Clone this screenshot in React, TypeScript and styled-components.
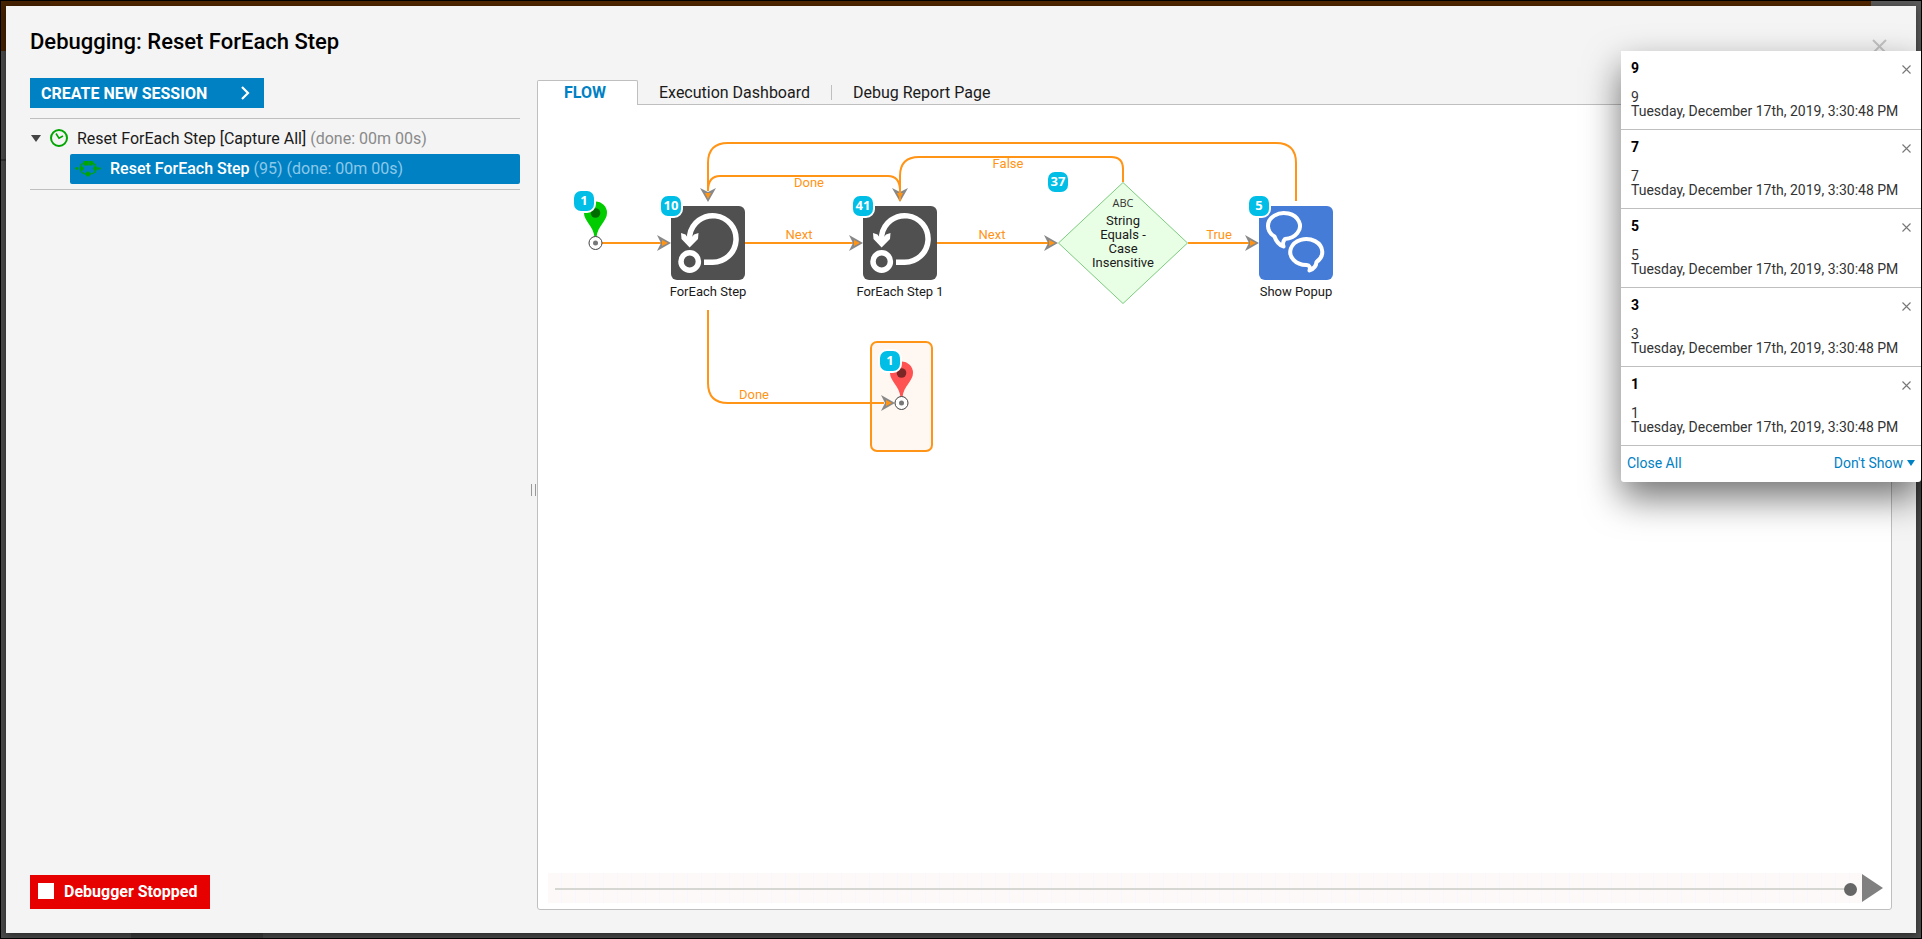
import React from "react";
import styled, { createGlobalStyle, css } from "styled-components";

const color = {
  blue: "#0081c4",
  orange: "#ff9416",
  line: "#bfbfbf",
  panel: "#f4f4f4",
  text: "#1a1a1a",
  muted: "#8a8a8a",
  arrow: "#888888",
};

const GlobalStyle = createGlobalStyle`
  *, *::before, *::after { box-sizing: border-box; }
  body { margin: 0; font-family: Roboto, "Liberation Sans", sans-serif; font-size: 16px; color: ${color.text}; }
  button { font-family: inherit; border: 0; padding: 0; background: none; cursor: pointer; color: inherit; }
  svg { display: block; }
`;

const Backdrop = styled.div`
  position: relative;
  min-height: 100vh;
  padding: 5px;
  border: 1px solid #000;
  display: flex;
  background:
    linear-gradient(#3e3e3e, #3e3e3e) 130px 100% / 132px 6px no-repeat,
    linear-gradient(#482200, #482200) 0 0 / 49px 50px no-repeat,
    linear-gradient(90deg, #522700 calc(100% - 50px), #5a5a5a calc(100% - 50px)) 0 0 / 100% 50px no-repeat,
    linear-gradient(#333, #333) 0 158px / 6px 2px no-repeat,
    #4c4c4c;
`;

const Dialog = styled.section`
  flex: 1;
  min-width: 0;
  display: flex;
  flex-direction: column;
  padding: 0 24px 23px;
  background: ${color.panel};
  box-shadow: 0 2px 8px rgba(0, 0, 0, 0.5);
`;

const Header = styled.header`
  height: 72px;
  flex: none;
  display: flex;
  justify-content: space-between;
  align-items: center;
  padding-right: 3px;
`;

const Title = styled.h1`
  margin: 0;
  font-size: 22px;
  line-height: 28px;
  font-weight: 500;
  color: #000;
`;

const IconButton = styled.button<{ $tone: string }>`
  color: ${(p) => p.$tone};
`;

const Body = styled.div`
  flex: 1;
  display: flex;
  min-height: 0;
`;

const Sidebar = styled.aside`
  width: 490px;
  flex: none;
  display: flex;
  flex-direction: column;
  align-items: flex-start;
  padding-bottom: 1px;
`;

const CreateButton = styled.button`
  width: 234px;
  height: 30px;
  display: flex;
  align-items: center;
  justify-content: space-between;
  padding: 0 14px 0 11px;
  background: ${color.blue};
  color: #fff;
  font-size: 16px;
  font-weight: 700;
`;

const Sessions = styled.ul`
  list-style: none;
  width: 100%;
  margin: 10px 0 0;
  padding: 5px 0;
  border-top: 1px solid ${color.line};
  border-bottom: 1px solid ${color.line};
`;

const SessionRow = styled.li<{ $selected?: boolean }>`
  height: 30px;
  display: flex;
  align-items: center;
  white-space: pre;
  padding-bottom: 2px;
  ${(p) =>
    p.$selected
      ? css`
          margin-left: 40px;
          padding-left: 5px;
          gap: 9px;
          border-radius: 2px;
          background: ${color.blue};
          color: #fff;
          font-weight: 500;
        `
      : css`
          gap: 9px;
          padding-left: 1px;
        `}
`;

const Muted = styled.span<{ $onBlue?: boolean }>`
  font-weight: 400;
  color: ${(p) => (p.$onBlue ? "#8dc8e8" : color.muted)};
`;

const StopButton = styled.button`
  margin-top: auto;
  width: 180px;
  height: 34px;
  display: flex;
  align-items: center;
  gap: 10px;
  padding: 0 0 2px 8px;
  background: #e60000;
  color: #fff;
  font-size: 16px;
  font-weight: 700;
`;

const StopSquare = styled.span`
  width: 16px;
  height: 16px;
  background: #fff;
`;

const Splitter = styled.div`
  width: 17px;
  flex: none;
  display: flex;
  align-items: center;
  justify-content: flex-end;
  padding-right: 1px;

  &::after {
    content: "";
    width: 5px;
    height: 12px;
    border: solid #999;
    border-width: 0 1px;
    margin-bottom: 8px;
  }
`;

const Main = styled.main`
  flex: 1;
  min-width: 0;
  display: flex;
  flex-direction: column;
`;

const Tabs = styled.div`
  height: 27px;
  padding-top: 2px;
  margin-bottom: -1px;
  display: flex;
  position: relative;
`;

const Tab = styled.button<{ $active?: boolean; $divided?: boolean }>`
  font-size: 16px;
  line-height: 22px;
  ${(p) =>
    p.$active
      ? css`
          width: 101px;
          padding-right: 5px;
          border: 1px solid ${color.line};
          border-bottom: 0;
          border-radius: 2px 2px 0 0;
          background: #fff;
          color: ${color.blue};
          font-weight: 700;
        `
      : css`
          padding: 0 21px;
        `}
  ${(p) =>
    p.$divided &&
    css`
      padding-left: 22px;
      background: linear-gradient(${color.line}, ${color.line}) 0 5px / 1px 15px no-repeat;
    `}
`;

const Panel = styled.div`
  flex: 1;
  display: flex;
  flex-direction: column;
  border: 1px solid ${color.line};
  border-radius: 0 0 3px 3px;
  background: #fff;
`;

const Canvas = styled.div`
  position: relative;
  flex: 1;
  min-height: 400px;
  overflow: hidden;
  font-size: 13px;
  line-height: 14px;
`;

const Edges = styled.svg`
  position: absolute;
  left: 0;
  top: 0;
`;

const At = styled.div<{ $x: number; $y: number }>`
  position: absolute;
  left: ${(p) => p.$x}px;
  top: ${(p) => p.$y}px;
`;

const EdgeLabel = styled(At)`
  transform: translate(-50%, -50%);
  color: ${color.orange};
`;

const StepCaption = styled.div`
  width: 114px;
  margin: 5px -20px 0;
  text-align: center;
`;

const Badge = styled.span`
  position: absolute;
  left: -12px;
  top: -12px;
  width: 24px;
  height: 24px;
  border: 2px solid #fff;
  border-radius: 9px;
  background: #00bee6;
  color: #fff;
  font: 700 13px/19px "Open Sans", "Noto Sans", sans-serif;
  text-align: center;
`;

const Diamond = styled(At)`
  width: 130px;
  height: 122px;
`;

const DiamondText = styled.div`
  position: absolute;
  inset: 14px 30px 0;
  text-align: center;
  line-height: 14px;
`;

const TypeTag = styled.div`
  font: 400 11px/14px "Open Sans", "Noto Sans", sans-serif;
  color: #333;
  margin-bottom: 4px;
`;

const EndBox = styled(At)`
  width: 63px;
  height: 111px;
  border: 2px solid ${color.orange};
  border-radius: 7px;
  background: #fff7f1;
`;

const Timeline = styled.div`
  height: 30px;
  flex: none;
  margin: 0 8px 6px 10px;
  display: flex;
  align-items: center;
`;

const TimelineTrack = styled.div`
  flex: 1;
  height: 30px;
  padding: 0 5px 0 7px;
  display: flex;
  align-items: center;
  background: repeating-linear-gradient(90deg, #fef9f9 0 13px, #f8f7fd 13px 14px);
`;

const Range = styled.input`
  appearance: none;
  width: 100%;
  height: 14px;
  margin: 2px 0 0;
  background: linear-gradient(#d6d6d3, #d6d6d3) 0 6px / 100% 2px no-repeat;

  &::-webkit-slider-thumb {
    appearance: none;
    width: 13px;
    height: 13px;
    border-radius: 50%;
    background: #666;
  }
`;

const Notices = styled.aside`
  position: absolute;
  top: 50px;
  right: 0;
  width: 300px;
  border-radius: 0 0 3px 3px;
  background: #fff;
  box-shadow: 0 16px 36px rgba(0, 0, 0, 0.55);
  font-size: 14px;
`;

const Notice = styled.article`
  position: relative;
  height: 79px;
  padding: 8px 10px 0;
  border-bottom: 1px solid ${color.line};
  line-height: 14px;
  color: #333;
`;

const NoticeHead = styled.div`
  height: 31px;
  display: flex;
  justify-content: space-between;
  align-items: flex-start;
`;

const NoticeTitle = styled.h2`
  margin: 0;
  font-size: 14px;
  line-height: 18px;
  font-weight: 700;
  color: #000;
`;

const NoticeClose = styled(IconButton)`
  margin-top: 6px;
`;

const NoticeText = styled.p`
  margin: 0;
  white-space: nowrap;
`;

const NoticeFooter = styled.footer`
  height: 36px;
  display: flex;
  align-items: center;
  justify-content: space-between;
  padding: 0 6px 2px;
`;

const LinkButton = styled.button`
  display: flex;
  align-items: center;
  gap: 4px;
  font-size: 14px;
  color: ${color.blue};
`;

function Cross({ size }: { size: number }) {
  return (
    <svg width={size} height={size} viewBox={`0 0 ${size} ${size}`} stroke="currentColor" strokeWidth="1.1">
      <path d={`M0.5 0.5L${size - 0.5} ${size - 0.5}M${size - 0.5} 0.5L0.5 ${size - 0.5}`} />
    </svg>
  );
}

function ClockIcon() {
  return (
    <svg width="18" height="18" viewBox="0 0 18 18" fill="none" stroke="#00a600">
      <circle cx="9" cy="9" r="8" strokeWidth="2" />
      <path d="M6 4.5L9 9.2L13 7" strokeWidth="1.6" />
    </svg>
  );
}

function FlowIcon() {
  return (
    <svg width="26" height="18" viewBox="0 0 26 18" fill="#00a600">
      <circle cx="1.6" cy="9.5" r="1.4" />
      <circle cx="6.5" cy="9.5" r="2.2" />
      <circle cx="20.5" cy="9.5" r="2.2" />
      <path d="M13 12L16.500 15L13 18L9.500 15Z" />
      <rect x="8.500" y="2" width="4.500" height="4.500" />
      <rect x="13.500" y="2" width="4.500" height="4.500" />
      <circle cx="24.600" cy="9.500" r="1.300" />
      <path d="M6 8V6L8 4M18 4L20.500 6V8M6.500 11v2l3 2M20.500 11v2l-4 2" fill="none" stroke="#00a600" strokeWidth="1.200" />
    </svg>
  );
}

function LoopIcon() {
  return (
    <svg width="74" height="74" viewBox="0 0 74 74" fill="none" stroke="#fff" strokeWidth="5.500">
      <rect width="74" height="74" rx="6" fill="#505050" stroke="none" />
      <path d="M33 56.300H41.500A23.300 23.300 0 1 0 18.800 29V35" />
      <circle cx="18.700" cy="55.500" r="8.700" />
      <path d="M10 27L14.500 28.500L18.600 34L23 28.500L27.500 27L27 33L18.600 41.500L10.500 33Z" fill="#fff" stroke="none" />
    </svg>
  );
}

function ChatIcon() {
  return (
    <svg width="74" height="74" viewBox="0 0 74 74" fill="none" stroke="#fff" strokeWidth="4" strokeLinejoin="round">
      <rect width="74" height="74" rx="6" fill="#457cd8" stroke="none" />
      <path d="M15.500 30.500A16 13 0 1 1 26 33Q23 36 24.500 40.500Q18 38 15.500 30.500Z" />
      <path d="M57.500 56A16 13 0 1 0 47.500 59Q52 59.500 50.500 64.500Q57 62 57.500 56Z" />
    </svg>
  );
}

function PinIcon({ fill, hole }: { fill: string; hole: string }) {
  return (
    <svg width="23" height="50" viewBox="0 0 23 50">
      <path d="M0 12A11.500 11.500 0 0 1 23 12C23 20 13.500 25 12.500 36H10.500C9.500 25 0 20 0 12Z" fill={fill} />
      <circle cx="11.500" cy="12" r="4.800" fill={hole} />
      <circle cx="11.500" cy="42" r="6.500" fill="#fff" stroke="#444" />
      <circle cx="11.500" cy="42" r="2.500" fill="#777" />
    </svg>
  );
}

function Arrow({ x, y, down }: { x: number; y: number; down?: boolean }) {
  return (
    <g transform={`translate(${x} ${y})${down ? " rotate(90)" : ""}`}>
      <path d="M0 0L-14 -8L-10 0L-14 8Z" fill={color.arrow} />
      <path d="M-3 0L-9 -3V3Z" fill={color.orange} />
    </g>
  );
}

const edgePaths = [
  "M64 138H124",
  "M207 138H316",
  "M399 138H510",
  "M650 138H712",
  "M758 96V58Q758 38 738 38H190Q170 38 170 58V86",
  "M585 77V64Q585 52 573 52H381Q362 52 362 71V96",
  "M362 86Q362 71 350 71H182Q170 71 170 86",
  "M170 205V278Q170 298 190 298H346",
];

const edgeLabels = [
  { text: "Next", x: 261, y: 130 },
  { text: "Next", x: 454, y: 130 },
  { text: "True", x: 681, y: 130 },
  { text: "False", x: 470, y: 59 },
  { text: "Done", x: 271, y: 78 },
  { text: "Done", x: 216, y: 290 },
];

const steps = [
  { name: "ForEach Step", count: 10, x: 133, icon: <LoopIcon /> },
  { name: "ForEach Step 1", count: 41, x: 325, icon: <LoopIcon /> },
  { name: "Show Popup", count: 5, x: 721, icon: <ChatIcon /> },
];

const notices = [9, 7, 5, 3, 1];

function FlowCanvas() {
  return (
    <Canvas>
      <EndBox $x={332} $y={236} />
      <Edges width="820" height="400" viewBox="0 0 820 400">
        <Arrow x={170} y={97} down />
        <Arrow x={362} y={97} down />
        <g fill="none" stroke={color.orange} strokeWidth="2">
          {edgePaths.map((d) => (
            <path key={d} d={d} />
          ))}
        </g>
        <Arrow x={133} y={138} />
        <Arrow x={325} y={138} />
        <Arrow x={520} y={138} />
        <Arrow x={721} y={138} />
        <Arrow x={357} y={298} />
      </Edges>
      <At $x={46} $y={96}>
        <PinIcon fill="#00cc00" hole="#006c00" />
        <Badge>1</Badge>
      </At>
      {steps.map((s) => (
        <At key={s.name} $x={s.x} $y={101}>
          {s.icon}
          <StepCaption>{s.name}</StepCaption>
          <Badge>{s.count}</Badge>
        </At>
      ))}
      <Diamond $x={520} $y={77}>
        <svg width="130" height="122" viewBox="0 0 130 122">
          <path d="M65 0.500L129.500 61L65 121.500L0.500 61Z" fill="#e9ffe5" stroke="#7ccb7f" />
        </svg>
        <DiamondText>
          <TypeTag>ABC</TypeTag>
          String Equals - Case Insensitive
        </DiamondText>
        <Badge>37</Badge>
      </Diamond>
      <At $x={352} $y={256}>
        <PinIcon fill="#ff5252" hole="#7d2626" />
        <Badge>1</Badge>
      </At>
      {edgeLabels.map((l) => (
        <EdgeLabel key={`${l.x}-${l.y}`} $x={l.x} $y={l.y}>
          {l.text}
        </EdgeLabel>
      ))}
    </Canvas>
  );
}

export default function App() {
  return (
    <>
      <GlobalStyle />
      <Backdrop>
        <Dialog aria-label="Debugger">
          <Header>
            <Title>Debugging: Reset ForEach Step</Title>
            <IconButton $tone="#c4c4c4" aria-label="Close">
              <svg width="18" height="22" viewBox="0 0 18 22" stroke="currentColor" strokeWidth="2">
                <path d="M2 9L15 22M15 9L2 22" />
              </svg>
            </IconButton>
          </Header>
          <Body>
            <Sidebar>
              <CreateButton>
                CREATE NEW SESSION
                <svg width="10" height="14" viewBox="0 0 10 14" fill="none" stroke="#fff" strokeWidth="2.200">
                  <path d="M2 1L8 7L2 13" />
                </svg>
              </CreateButton>
              <Sessions>
                <SessionRow>
                  <svg width="10" height="7" viewBox="0 0 10 7">
                    <path d="M0 0H10L5 7Z" fill="#444" />
                  </svg>
                  <ClockIcon />
                  <span>
                    Reset ForEach Step [Capture All] <Muted>(done: 00m 00s)</Muted>
                  </span>
                </SessionRow>
                <SessionRow $selected>
                  <FlowIcon />
                  <span>
                    Reset ForEach Step <Muted $onBlue>(95) (done: 00m 00s)</Muted>
                  </span>
                </SessionRow>
              </Sessions>
              <StopButton>
                <StopSquare />
                Debugger Stopped
              </StopButton>
            </Sidebar>
            <Splitter />
            <Main>
              <Tabs role="tablist">
                <Tab role="tab" aria-selected $active>
                  FLOW
                </Tab>
                <Tab role="tab">Execution Dashboard</Tab>
                <Tab role="tab" $divided>
                  Debug Report Page
                </Tab>
              </Tabs>
              <Panel>
                <FlowCanvas />
                <Timeline>
                  <TimelineTrack>
                    <Range type="range" min={0} max={95} defaultValue={95} aria-label="Step position" />
                  </TimelineTrack>
                  <IconButton $tone="#808080" aria-label="Play">
                    <svg width="21" height="28" viewBox="0 0 21 28">
                      <path d="M0 0L21 14L0 28Z" fill="currentColor" />
                    </svg>
                  </IconButton>
                </Timeline>
              </Panel>
            </Main>
          </Body>
        </Dialog>
        <Notices aria-label="Notifications">
          {notices.map((n) => (
            <Notice key={n}>
              <NoticeHead>
                <NoticeTitle>{n}</NoticeTitle>
                <NoticeClose $tone="#777" aria-label="Dismiss">
                  <Cross size={9} />
                </NoticeClose>
              </NoticeHead>
              <NoticeText>{n}</NoticeText>
              <NoticeText>Tuesday, December 17th, 2019, 3:30:48 PM</NoticeText>
            </Notice>
          ))}
          <NoticeFooter>
            <LinkButton>Close All</LinkButton>
            <LinkButton>
              Don't Show
              <svg width="8" height="6" viewBox="0 0 8 6">
                <path d="M0 0H8L4 6Z" fill="currentColor" />
              </svg>
            </LinkButton>
          </NoticeFooter>
        </Notices>
      </Backdrop>
    </>
  );
}
